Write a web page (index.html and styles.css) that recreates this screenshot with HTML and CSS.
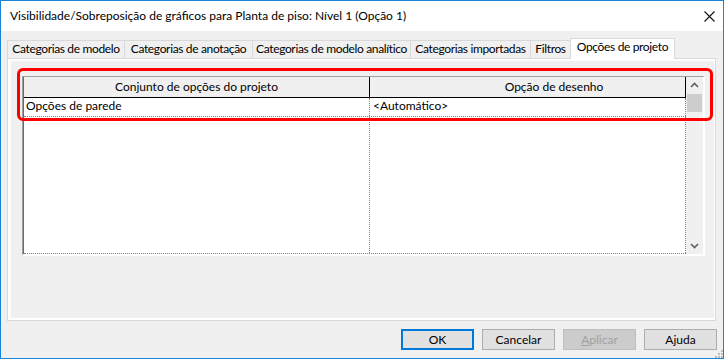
FILE: index.html
```html
<!DOCTYPE html>
<html lang="pt">
<head>
    <meta charset="UTF-8">
    <meta name="viewport" content="width=device-width, initial-scale=1.0">
    <title>Visibilidade/Sobreposição de gráficos</title>
    <link rel="stylesheet" href="styles.css">
</head>
<body>
    <div class="window">
        <div class="titlebar">
            <span class="title">Visibilidade/Sobreposição de gráficos para Planta de piso: Nível 1 (Opção 1)</span>
            <svg class="close" width="11" height="11" viewBox="0 0 11 11">
                <path d="M0.5 0.5 L10.5 10.5 M10.5 0.5 L0.5 10.5" stroke="#111" stroke-width="1.1" fill="none"/>
            </svg>
        </div>

        <div class="content">
            <div class="tabs">
                <div class="tab tab-model">Categorias de modelo</div>
                <div class="tab tab-annotation">Categorias de anotação</div>
                <div class="tab tab-analytic">Categorias de modelo analítico</div>
                <div class="tab tab-imported">Categorias importadas</div>
                <div class="tab tab-filters">Filtros</div>
                <div class="tab tab-options active">Opções de projeto</div>
            </div>

            <div class="panel">
                <div class="page">
                    <div class="grid">
                        <div class="grid-main">
                            <div class="row head">
                                <div class="cell col-set">Conjunto de opções do projeto</div>
                                <div class="cell col-option">Opção de desenho</div>
                            </div>
                            <div class="row item">
                                <div class="cell col-set">Opções de parede</div>
                                <div class="cell col-option">&lt;Automático&gt;</div>
                            </div>
                            <div class="row filler">
                                <div class="cell col-set"></div>
                                <div class="cell col-option"></div>
                            </div>
                        </div>
                        <div class="scrollbar">
                            <svg class="arrow" width="17" height="17" viewBox="0 0 17 17">
                                <path d="M5 10 L8.5 6.5 L12 10" stroke="#606060" stroke-width="1.6" fill="none"/>
                            </svg>
                            <div class="thumb"></div>
                            <div class="track"></div>
                            <svg class="arrow" width="17" height="17" viewBox="0 0 17 17">
                                <path d="M5 7 L8.5 10.5 L12 7" stroke="#606060" stroke-width="1.6" fill="none"/>
                            </svg>
                        </div>
                    </div>
                </div>
            </div>

            <div class="buttons">
                <button class="btn default">OK</button>
                <button class="btn">Cancelar</button>
                <button class="btn disabled"><u>A</u>plicar</button>
                <button class="btn">Ajuda</button>
            </div>
        </div>

        <div class="highlight"></div>

        <svg class="grip" width="8" height="8" viewBox="0 0 8 8">
            <rect x="6" y="0" width="2" height="2" fill="#bcbcbc"/>
            <rect x="3" y="3" width="2" height="2" fill="#bcbcbc"/>
            <rect x="6" y="3" width="2" height="2" fill="#bcbcbc"/>
            <rect x="0" y="6" width="2" height="2" fill="#bcbcbc"/>
            <rect x="3" y="6" width="2" height="2" fill="#bcbcbc"/>
            <rect x="6" y="6" width="2" height="2" fill="#bcbcbc"/>
        </svg>
    </div>
</body>
</html>
```

FILE: styles.css
```css
body {
    margin: 0;
    padding: 0;
    background-color: #fff;
    font-family: Lato, "Noto Sans", sans-serif;
    font-size: 12px;
    line-height: 16px;
    color: #000;
}

.window {
    position: relative;
    box-sizing: border-box;
    width: 724px;
    height: 359px;
    border: 1px solid #1883d7;
    background-color: #f0f0f0;
    display: flex;
    flex-direction: column;
}

.titlebar {
    height: 30px;
    flex-shrink: 0;
    background-color: #fff;
    display: flex;
    align-items: center;
    justify-content: space-between;
    padding: 0 8px 0 9px;
}

.close {
    display: block;
}

.content {
    flex: 1;
    padding: 7px 7px 0 6px;
}

/* tabs */

.tabs {
    display: flex;
    align-items: flex-end;
    height: 20px;
}

.tab {
    box-sizing: border-box;
    height: 18px;
    border: 1px solid #d9d9d9;
    border-bottom: none;
    margin-left: -1px;
    background-color: #f0f0f0;
    text-align: center;
    white-space: nowrap;
    overflow: hidden;
    letter-spacing: -0.35px;
}

.tab:first-child {
    margin-left: 0;
}

.tab-model { width: 118px; }
.tab-annotation { width: 129px; }
.tab-analytic { width: 159px; }
.tab-imported { width: 121px; }
.tab-filters { width: 41px; }
.tab-options { width: 105px; }

.tab.active {
    position: relative;
    z-index: 1;
    height: 21px;
    margin-bottom: -1px;
    background-color: #fff;
}

.panel {
    box-sizing: border-box;
    height: 263px;
    border: 1px solid #d9d9d9;
    background-color: #fff;
    padding: 2px 1px 2px 3px;
}

.page {
    height: 100%;
    background-color: #f0f0f0;
    padding: 15px 0 0 11px;
    box-sizing: border-box;
}

/* grid */

.grid {
    display: flex;
    box-sizing: border-box;
    width: 683px;
    height: 180px;
    border-style: solid;
    border-width: 1px 2px 2px 1px;
    border-color: #a0a0a0 #fff #fff #a0a0a0;
}

.grid-main {
    display: flex;
    flex-direction: column;
    width: 662px;
    border-left: 1px solid #696969;
    background-color: #fff;
}

.row {
    display: flex;
}

.cell {
    box-sizing: border-box;
    white-space: nowrap;
    overflow: hidden;
}

.col-set {
    width: 346px;
}

.col-option {
    width: 316px;
}

.head {
    height: 21px;
    border-bottom: 1px solid #000;
    background-color: #f0f0f0;
    box-sizing: border-box;
}

.head .cell {
    border-right: 1px solid #000;
    text-align: center;
    padding-top: 2px;
}

.head .col-option {
    padding-left: 53px;
}

.item {
    height: 19px;
    box-sizing: border-box;
    border-bottom: 1px dotted #808080;
}

.item .col-set {
    padding-left: 2px;
}

.item .col-option {
    padding-left: 3px;
}

.item .cell,
.filler .cell {
    border-right: 1px dotted #808080;
}

.filler {
    flex: 1;
    border-bottom: 1px dotted #808080;
}

.scrollbar {
    width: 17px;
    display: flex;
    flex-direction: column;
    background-color: #f0f0f0;
}

.arrow {
    display: block;
    flex-shrink: 0;
}

.thumb {
    height: 18px;
    margin: 0 1px;
    background-color: #cdcdcd;
}

.track {
    flex: 1;
}

/* buttons */

.buttons {
    display: flex;
    justify-content: flex-end;
    gap: 8px;
    margin: 8px -1px 0 0;
}

.btn {
    box-sizing: border-box;
    width: 73px;
    height: 21px;
    padding: 0;
    border: 1px solid #adadad;
    background-color: #e1e1e1;
    font-family: inherit;
    font-size: 12px;
    line-height: 16px;
    color: #000;
}

.btn.default {
    border: 2px solid #0078d7;
}

.btn.disabled {
    background-color: #cccccc;
    border-color: #bfbfbf;
    color: #a0a0a0;
}

.highlight {
    position: absolute;
    left: 16px;
    top: 67px;
    width: 696px;
    height: 53px;
    box-sizing: border-box;
    border: 3px solid #f00;
    border-radius: 6px;
}

.grip {
    position: absolute;
    right: 0;
    bottom: 0;
}
```
